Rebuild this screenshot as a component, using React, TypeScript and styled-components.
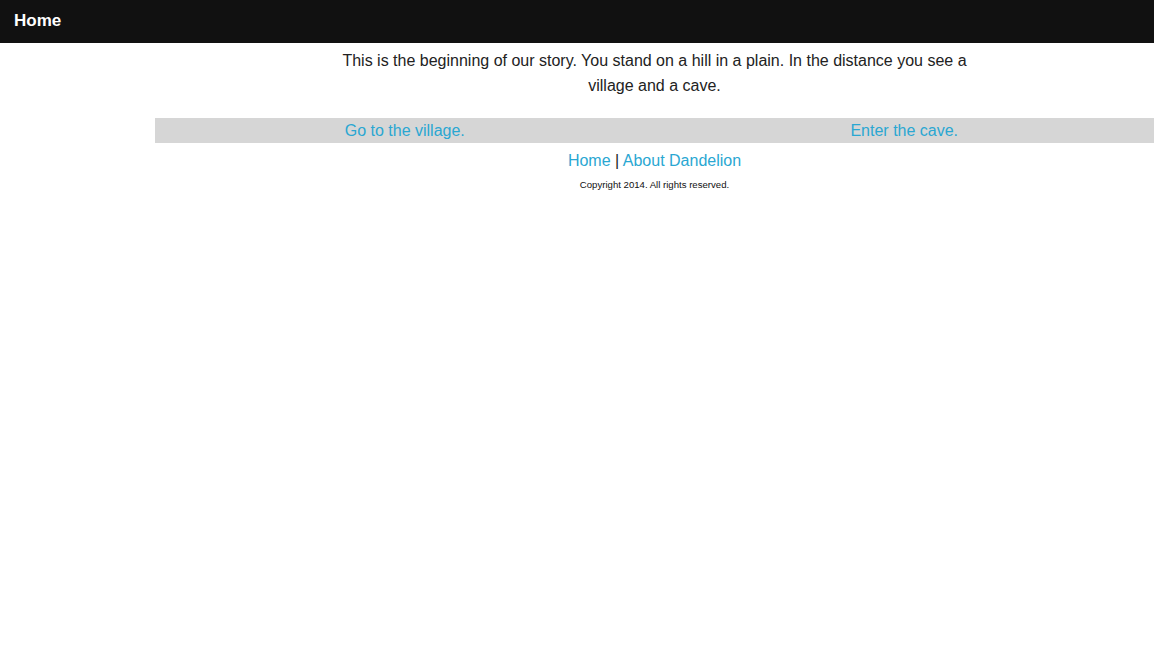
import React from "react";
import styled, { createGlobalStyle } from "styled-components";

const Global = createGlobalStyle`
  html, body { margin: 0; padding: 0; background: #fff; }
  body { font-family: "Liberation Sans", Arial, sans-serif; color: #222; }
  a { text-decoration: none; color: #2aa7d2; }
`;

const Header = styled.header`
  height: 43px;
  box-sizing: border-box;
  background: #111;
  display: flex;
  align-items: center;
  padding: 0 14px 2px;
`;

const Brand = styled.a`
  color: #fff;
  font-weight: bold;
  font-size: 17px;
`;

const Layout = styled.div`
  display: grid;
  grid-template-columns: 155px 1fr;
`;

const Aside = styled.aside``;

const Main = styled.main`
  display: flex;
  flex-direction: column;
  align-items: center;
`;

const Story = styled.p`
  width: 640px;
  margin: 5px 0 20px;
  font-size: 16px;
  line-height: 25px;
  text-align: center;
  color: #222;
`;

const Choices = styled.div`
  align-self: stretch;
  display: grid;
  grid-template-columns: 1fr 1fr;
  background: #d6d6d6;
  height: 25px;
  align-items: center;
`;

const Choice = styled.a`
  text-align: center;
  font-size: 16px;
`;

const Footer = styled.footer`
  display: flex;
  flex-direction: column;
  align-items: center;
  padding-top: 7px;
`;

const FooterLinks = styled.div`
  font-size: 16px;
  line-height: 22px;
  color: #222;
`;

const Copyright = styled.div`
  font-size: 9.6px;
  margin-top: 7px;
  color: #111;
`;

export default function App() {
  return (
    <>
      <Global />
      <Header>
        <Brand href="#">Home</Brand>
      </Header>
      <Layout>
        <Aside />
        <Main>
          <Story>
            This is the beginning of our story. You stand on a hill in a plain. In the distance you see a village and a cave.
          </Story>
          <Choices>
            <Choice href="#">Go to the village.</Choice>
            <Choice href="#">Enter the cave.</Choice>
          </Choices>
          <Footer>
            <FooterLinks>
              <a href="#">Home</a> | <a href="#">About Dandelion</a>
            </FooterLinks>
            <Copyright>Copyright 2014. All rights reserved.</Copyright>
          </Footer>
        </Main>
      </Layout>
    </>
  );
}
